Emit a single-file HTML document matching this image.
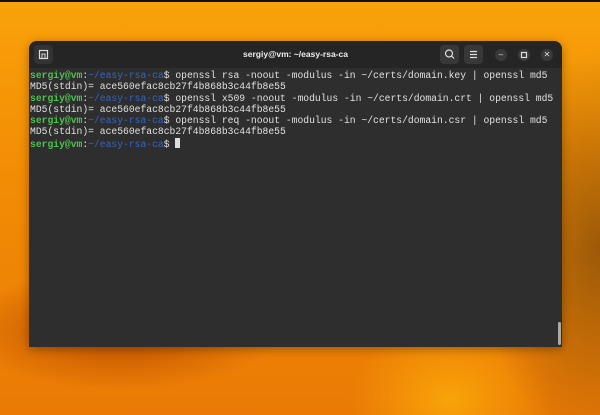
<!DOCTYPE html>
<html><head><style>
html,body{margin:0;padding:0;width:600px;height:415px;overflow:hidden}
body{position:relative;background:
radial-gradient(ellipse 160px 60px at 120px 330px, rgba(170,60,0,.75), rgba(170,60,0,0)),
radial-gradient(ellipse 120px 200px at 600px 250px, rgba(120,70,10,.7), rgba(120,70,10,0)),
radial-gradient(ellipse 100px 80px at 450px 400px, rgba(255,180,10,.7), rgba(255,180,10,0)),
linear-gradient(180deg,#f9a20a 0%,#f38d05 40%,#ea7a05 100%);}
.top{position:absolute;left:0;top:0;width:600px;height:2px;background:#111}
.win{position:absolute;left:29px;top:41px;width:533px;height:306px;background:#2e2e2e;border-radius:8px 8px 0 0;box-shadow:0 2px 10px rgba(0,0,0,.35);overflow:hidden}
.tb{height:27px;background:#252525;position:relative}
.title{position:absolute;left:0;right:0;top:8px;text-align:center;color:#eee;font:bold 8.5px "Liberation Sans",sans-serif}
.btn{position:absolute;top:4px;width:19px;height:19px;border-radius:4px;background:#383838}
.cb{position:absolute;top:8px;width:12px;height:12px;border-radius:50%;background:#3a3a3a;color:#ddd;font:8px "Liberation Sans",sans-serif;text-align:center;line-height:12px}
pre{margin:0;padding:2px 0 0 1px;font:9.7px/11.3px "Liberation Mono",monospace;color:#e0e0e0}
.g{color:#4ec14e;font-weight:bold}.b{color:#3465c4}
.cur{display:inline-block;width:5px;height:10px;background:#ddd;vertical-align:-1px}
.sb{position:absolute;left:529px;top:281px;width:3px;height:23px;background:#aaa;border-radius:2px}
</style></head><body>
<div class="top"></div>
<div class="win">
 <div class="tb">
  <div class="btn" style="left:5px;background:#333"><svg width="19" height="19"><rect x="5.5" y="5.5" width="8" height="8" fill="none" stroke="#ddd" stroke-width="1.2"/><rect x="8" y="9" width="3" height="4.5" fill="none" stroke="#ddd"/></svg></div>
  <div class="title">sergiy@vm: ~/easy-rsa-ca</div>
  <div class="btn" style="left:411px"><svg width="19" height="19"><circle cx="9" cy="8.5" r="3.5" fill="none" stroke="#ddd" stroke-width="1.2"/><line x1="11.5" y1="11" x2="14" y2="13.5" stroke="#ddd" stroke-width="1.2"/></svg></div>
  <div class="btn" style="left:435px"><svg width="19" height="19"><path d="M6 6.5h7M6 9.5h7M6 12.5h7" stroke="#ddd" stroke-width="1.2"/></svg></div>
  <div class="cb" style="left:466px">–</div>
  <div class="cb" style="left:489px"><svg width="12" height="12"><rect x="3.5" y="3.5" width="5" height="5" fill="none" stroke="#ddd" stroke-width="1.2"/></svg></div>
  <div class="cb" style="left:512px">✕</div>
 </div>
<pre><span class="g">sergiy@vm</span>:<span class="b">~/easy-rsa-ca</span>$ openssl rsa -noout -modulus -in ~/certs/domain.key | openssl md5
MD5(stdin)= ace560efac8cb27f4b868b3c44fb8e55
<span class="g">sergiy@vm</span>:<span class="b">~/easy-rsa-ca</span>$ openssl x509 -noout -modulus -in ~/certs/domain.crt | openssl md5
MD5(stdin)= ace560efac8cb27f4b868b3c44fb8e55
<span class="g">sergiy@vm</span>:<span class="b">~/easy-rsa-ca</span>$ openssl req -noout -modulus -in ~/certs/domain.csr | openssl md5
MD5(stdin)= ace560efac8cb27f4b868b3c44fb8e55
<span class="g">sergiy@vm</span>:<span class="b">~/easy-rsa-ca</span>$ <span class="cur"></span></pre>
 <div class="sb"></div>
</div>
</body></html>
